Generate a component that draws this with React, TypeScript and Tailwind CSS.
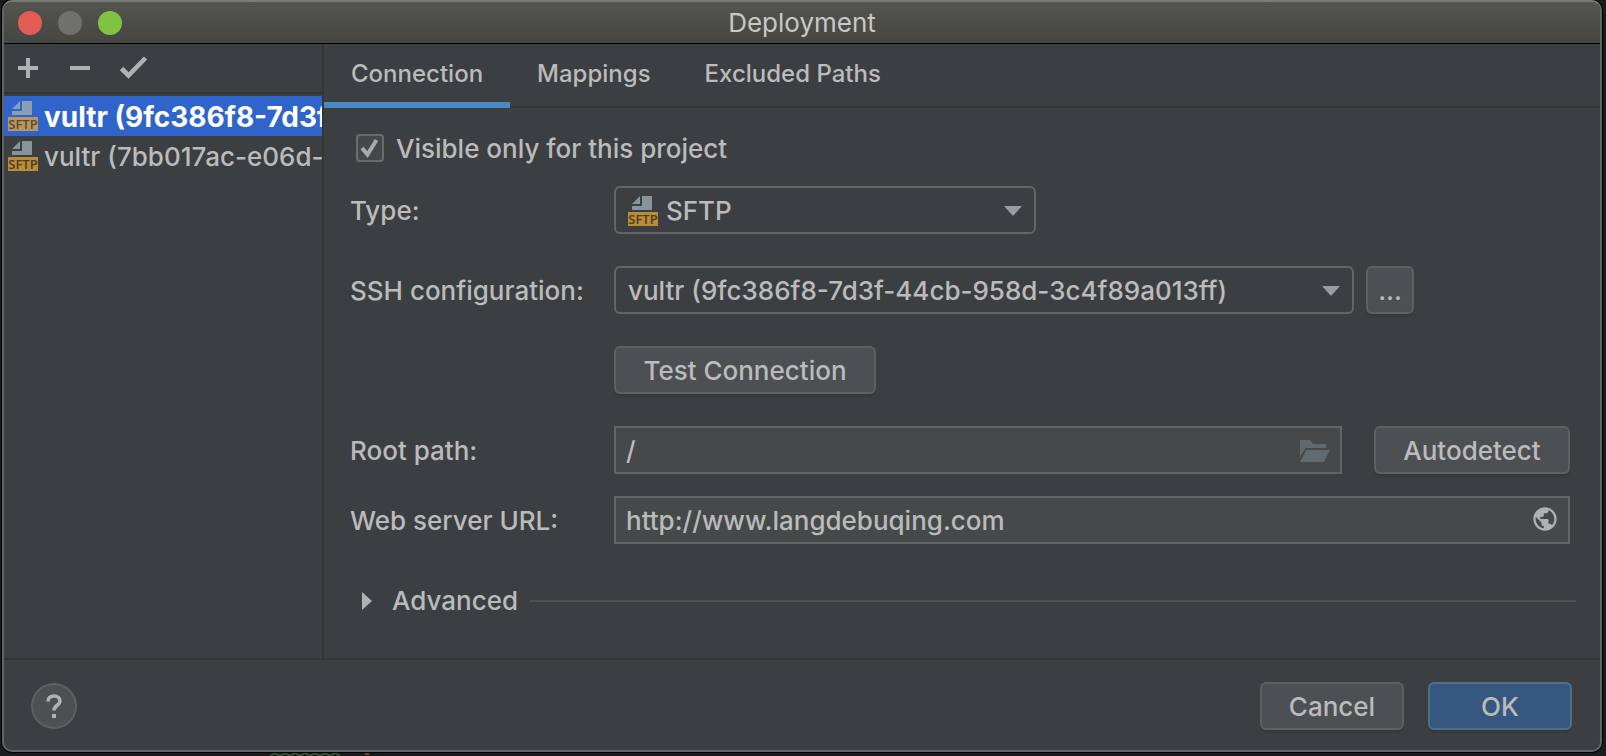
import { useState } from "react";
import type { ReactNode } from "react";

const SERVERS = [
  { id: "9fc386f8", name: "vultr (9fc386f8-7d3f-44cb-958d-3c4f89a013ff)" },
  { id: "7bb017ac", name: "vultr (7bb017ac-e06d-4f0b-9a3e-51c2d08e7b6a)" },
];

const TABS = ["Connection", "Mappings", "Excluded Paths"];

function SftpIcon({ selected = false, className = "" }: { selected?: boolean; className?: string }) {
  return (
    <svg viewBox="0 0 30 30" aria-hidden="true" className={`size-[30px] shrink-0 ${className}`}>
      <path d="M14 0h10v14H4v-4h10z" fill={selected ? "#8a9eb8" : "#87949b"} />
      <path d="M12 0v8H4z" fill={selected ? "#8a9eb8" : "#87949b"} />
      <path d="M0 16h30v14H0z" fill={selected ? "#b9965f" : "#ba8c38"} />
      <text
        x="15"
        y="28"
        textAnchor="middle"
        fontFamily="'Open Sans', sans-serif"
        fontSize="13"
        fontWeight="600"
        fill={selected ? "#5c4a33" : "#4f3d20"}
      >
        SFTP
      </text>
    </svg>
  );
}

function Arrow() {
  return (
    <svg viewBox="0 0 18 10" aria-hidden="true" className="pointer-events-none absolute top-5 right-[14px] h-[10px] w-[18px]">
      <path d="M0 0h18L9 10z" fill="#9a9da0" />
    </svg>
  );
}

function FieldLabel({ htmlFor, children }: { htmlFor: string; children: ReactNode }) {
  return (
    <label htmlFor={htmlFor} className="w-[264px] shrink-0 pt-[2px]">
      {children}
    </label>
  );
}

function PushButton({ children, primary = false, className = "", label }: { children: ReactNode; primary?: boolean; className?: string; label?: string }) {
  return (
    <button
      type="button"
      aria-label={label}
      className={`h-12 shrink-0 rounded-md border-2 pt-[2px] text-center shadow-[0_3px_1px_#37393a] ${
        primary ? "border-[#4c708c] bg-[#365880]" : "border-[#5e6060] bg-[#4c5052]"
      } ${className}`}
    >
      {children}
    </button>
  );
}

export default function App() {
  const [active, setActive] = useState(0);
  const [tab, setTab] = useState(0);

  return (
    <div className="relative flex min-h-screen flex-col overflow-hidden bg-[#1b1c1d] pr-1 pb-1 pl-[2px] font-['Inter','Liberation_Sans',sans-serif] text-[26px] leading-8 font-medium text-[#bbbbbb]">
      <svg viewBox="0 0 110 3" aria-hidden="true" className="absolute bottom-0 left-[270px] h-[3px] w-[110px]">
        <path d="M0 3l5-3 5 3 5-3 5 3 5-3 5 3 5-3 5 3 5-3 5 3 5-3 5 3 5-3 5 3" fill="none" stroke="#3c5a3f" strokeWidth="1.5" />
        <path d="M95 0h4v2h-4z" fill="#7a4327" />
      </svg>
      <div className="relative flex flex-1 flex-col overflow-hidden rounded-[10px] border-2 border-[#626567] border-t-[#7b7b78] bg-[#3c3f41] shadow-[0_0_0_1px_#000]">
        <header className="flex h-[42px] shrink-0 items-center border-b border-black bg-linear-to-b from-[#555550] to-[#454541]">
          <div className="flex-1">
            <div className="flex gap-4 pl-[14px]">
              <button type="button" aria-label="Close" className="size-6 rounded-full bg-[#e25b54]" />
              <button type="button" aria-label="Minimize" className="size-6 rounded-full bg-[#71716e]" />
              <button type="button" aria-label="Zoom" className="size-6 rounded-full bg-[#80c340]" />
            </div>
          </div>
          <h1 className="font-normal text-[#c8c8c5]">Deployment</h1>
          <div className="flex-1" />
        </header>

        <div className="flex flex-1">
          <aside className="flex w-80 shrink-0 flex-col border-r-2 border-[#353535]">
            <div className="flex h-[50px] items-center gap-6 border-b-2 border-[#353535] pl-[10px]">
              <button type="button" aria-label="Add">
                <svg viewBox="0 0 28 28" className="size-7">
                  <path d="M12 4h4v8h8v4h-8v8h-4v-8H4v-4h8z" fill="#afb1b3" />
                </svg>
              </button>
              <button type="button" aria-label="Remove">
                <svg viewBox="0 0 28 28" className="size-7">
                  <path d="M4 12h20v4H4z" fill="#afb1b3" />
                </svg>
              </button>
              <button type="button" aria-label="Use as default">
                <svg viewBox="0 0 28 28" overflow="visible" className="size-7">
                  <path d="M3.500 14.500l7 7L27.500 4" fill="none" stroke="#afb1b3" strokeWidth="4.600" />
                </svg>
              </button>
            </div>
            <ul className="mt-[2px]">
              {SERVERS.map((server, i) => (
                <li key={server.id}>
                  <button
                    type="button"
                    onClick={() => setActive(i)}
                    className={`flex h-10 w-full items-center gap-[6px] overflow-hidden pl-1 whitespace-nowrap ${
                      active === i ? "bg-[#2f65ca] text-[28px] font-bold text-white" : ""
                    }`}
                  >
                    <SftpIcon selected={active === i} />
                    <span className="pt-[2px]">{server.name}</span>
                  </button>
                </li>
              ))}
            </ul>
          </aside>

          <main className="flex min-w-0 flex-1 flex-col">
            <nav className="flex h-16 shrink-0 border-b-2 border-[#353535] text-2xl">
              {TABS.map((name, i) => (
                <button
                  key={name}
                  type="button"
                  onClick={() => setTab(i)}
                  className={`-mb-[2px] border-b-[6px] px-[27px] pt-[2px] ${tab === i ? "border-[#4a88c7]" : "border-transparent"}`}
                >
                  {name}
                </button>
              ))}
            </nav>

            <div className="flex flex-col pt-6 pr-[30px] pl-[26px]">
              <div className="flex h-8 items-center gap-3 pl-[6px]">
                <span className="relative flex size-7">
                  <input
                    id="visible"
                    type="checkbox"
                    defaultChecked
                    className="peer size-7 appearance-none rounded-[4px] border-2 border-[#6b6b6b] bg-[#43494a]"
                  />
                  <svg viewBox="0 0 28 28" aria-hidden="true" className="pointer-events-none absolute inset-0 hidden size-7 peer-checked:block">
                    <path d="M6 14l5.500 6.500L20.500 6" fill="none" stroke="#a9aaab" strokeWidth="4" />
                  </svg>
                </span>
                <label htmlFor="visible" className="pt-[2px]">Visible only for this project</label>
              </div>

              <div className="mt-[22px] flex items-center">
                <FieldLabel htmlFor="type">Type:</FieldLabel>
                <div className="relative w-[422px]">
                  <SftpIcon className="pointer-events-none absolute top-[10px] left-[14px]" />
                  <select id="type" className="h-12 w-full appearance-none rounded-md border-2 border-[#646464] bg-transparent pt-[2px] pr-10 pl-[50px]">
                    <option>SFTP</option>
                  </select>
                  <Arrow />
                </div>
              </div>

              <div className="mt-8 flex items-center">
                <FieldLabel htmlFor="ssh">SSH configuration:</FieldLabel>
                <div className="relative w-[740px]">
                  <select id="ssh" className="h-12 w-full appearance-none rounded-md border-2 border-[#646464] bg-transparent pt-[2px] pr-10 pl-3">
                    <option>{SERVERS[0].name}</option>
                  </select>
                  <Arrow />
                </div>
                <PushButton label="Edit SSH configurations" className="ml-3 w-12">...</PushButton>
              </div>

              <div className="mt-8 flex pl-[264px]">
                <PushButton className="w-[262px]">Test Connection</PushButton>
              </div>

              <div className="mt-8 flex items-center">
                <FieldLabel htmlFor="root">Root path:</FieldLabel>
                <div className="relative flex-1">
                  <input id="root" defaultValue="/" className="block h-12 w-full border-2 border-[#646464] bg-[#45494a] pr-14 pl-[10px]" />
                  <button type="button" aria-label="Browse" className="absolute top-[14px] right-3 flex">
                    <svg viewBox="0 0 30 22" className="h-[22px] w-[30px]">
                      <path d="M0 0h10l3 4h13v4H5.500L0 17z" fill="#616a6e" />
                      <path d="M6.500 10H30l-6 12H0z" fill="#616a6e" />
                    </svg>
                  </button>
                </div>
                <PushButton className="ml-8 w-[196px]">Autodetect</PushButton>
              </div>

              <div className="mt-[22px] flex items-center">
                <FieldLabel htmlFor="url">Web server URL:</FieldLabel>
                <div className="relative flex-1">
                  <input id="url" defaultValue="http://www.langdebuqing.com" className="block h-12 w-full border-2 border-[#646464] bg-[#45494a] pr-14 pl-[10px]" />
                  <button type="button" aria-label="Open in browser" className="absolute top-[9px] right-[11px] flex">
                    <svg viewBox="0 0 24 24" className="size-7">
                      <path
                        d="M12 2C6.480 2 2 6.480 2 12s4.480 10 10 10 10-4.480 10-10S17.520 2 12 2zm-1 17.930c-3.950-.490-7-3.850-7-7.930 0-.620.080-1.210.210-1.790L9 15v1c0 1.100.900 2 2 2v1.930zm6.900-2.540c-.260-.810-1-1.390-1.900-1.390h-1v-3c0-.550-.450-1-1-1H8v-2h2c.550 0 1-.450 1-1V7h2c1.100 0 2-.900 2-2v-.410c2.930 1.190 5 4.060 5 7.410 0 2.080-.800 3.970-2.100 5.390z"
                        fill="#afb1b3"
                      />
                    </svg>
                  </button>
                </div>
              </div>
            </div>

            <div className="mt-[41px] mb-[41px] flex items-center gap-3 pr-6 pl-[38px]">
              <button type="button" aria-expanded="false" className="flex items-center gap-5">
                <svg viewBox="0 0 10 18" aria-hidden="true" className="h-[18px] w-[10px]">
                  <path d="M0 0l10 9-10 9z" fill="#afb1b3" />
                </svg>
                Advanced
              </button>
              <hr className="flex-1 border-t-2 border-[#515151]" />
            </div>
          </main>
        </div>

        <footer className="flex h-[92px] shrink-0 items-center border-t-2 border-[#353535] pt-[2px] pr-[28px] pl-[27px]">
          <button type="button" aria-label="Help" className="flex size-[46px] items-center justify-center rounded-full border-2 border-[#5e6060] bg-[#4c5052]">
            <svg viewBox="0 0 18 26" className="h-[26px] w-[18px]">
              <path d="M3 8.500C3 5 5.500 3 9 3s6 2 6 5.200c0 4-6 4.300-6 9.300" fill="none" stroke="#afb1b3" strokeWidth="3.600" />
              <path d="M7 21h4v4H7z" fill="#afb1b3" />
            </svg>
          </button>
          <div className="ml-auto flex gap-6">
            <PushButton className="w-36">Cancel</PushButton>
            <PushButton primary className="w-36">OK</PushButton>
          </div>
        </footer>
      </div>
    </div>
  );
}
